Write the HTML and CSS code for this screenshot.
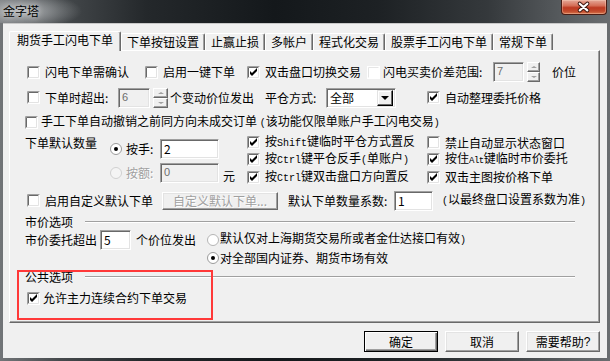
FILE: index.html
```html
<!DOCTYPE html>
<html>
<head>
<meta charset="utf-8">
<link rel="stylesheet" href="styles.css">
</head>
<body>
<svg class="defs" width="0" height="0" aria-hidden="true">
  <defs>
    <symbol id="box" viewBox="0 0 13 13">
      <rect width="13" height="13" fill="#fff"/>
      <path d="M0.5 12.5V0.5H12.5" stroke="#a0a0a0" fill="none"/>
      <path d="M1.5 11.5V1.5H11.5" stroke="#696969" fill="none"/>
      <path d="M1.5 11.5H11.5V1.5" stroke="#e3e3e3" fill="none"/>
    </symbol>
    <symbol id="boxon" viewBox="0 0 13 13">
      <rect width="13" height="13" fill="#fff"/>
      <path d="M0.5 12.5V0.5H12.5" stroke="#a0a0a0" fill="none"/>
      <path d="M1.5 11.5V1.5H11.5" stroke="#696969" fill="none"/>
      <path d="M1.5 11.5H11.5V1.5" stroke="#e3e3e3" fill="none"/>
      <polygon points="3,5 5,7 10,2 10,5 5,10 3,8" fill="#000"/>
    </symbol>
    <symbol id="boxlite" viewBox="0 0 13 13">
      <rect width="13" height="13" fill="#fff"/>
      <path d="M1.5 11.5V1.5H11.5" stroke="#e6e6e6" fill="none"/>
    </symbol>
    <symbol id="rad" viewBox="0 0 12 12">
      <circle cx="6" cy="6" r="5.5" fill="#fff" stroke="#b4b4b4"/>
    </symbol>
    <symbol id="radon" viewBox="0 0 12 12">
      <circle cx="6" cy="6" r="5.5" fill="#fff" stroke="#9a9a9a"/>
      <circle cx="6" cy="6" r="2" fill="#000"/>
    </symbol>
    <symbol id="raddis" viewBox="0 0 12 12">
      <circle cx="6" cy="6" r="5.5" fill="#f4f4f4" stroke="#d0d0d0"/>
    </symbol>
  </defs>
</svg>

<div class="window">
  <div class="titlebar">
    <span class="title">金字塔</span>
    <div class="close">
      <svg width="46" height="15" viewBox="0 0 46 15">
        <path d="M18.5 3.5 L26.5 10.5 M26.5 3.5 L18.5 10.5" stroke="#3c1710" stroke-width="4.2" stroke-linecap="round"/>
        <path d="M18.5 3.5 L26.5 10.5 M26.5 3.5 L18.5 10.5" stroke="#fff" stroke-width="2.2" stroke-linecap="round"/>
      </svg>
    </div>
  </div>

  <div class="client">
    <div class="tabs">
      <div class="tab active">期货手工闪电下单</div>
      <div class="tab">下单按钮设置</div>
      <div class="tab">止赢止损</div>
      <div class="tab">多帐户</div>
      <div class="tab">程式化交易</div>
      <div class="tab">股票手工闪电下单</div>
      <div class="tab">常规下单</div>
    </div>

    <div class="panel">
      <div class="row r1">
        <label class="opt"><svg class="cb"><use href="#box"/></svg><span>闪电下单需确认</span></label>
        <label class="opt"><svg class="cb"><use href="#box"/></svg><span>启用一键下单</span></label>
        <label class="opt"><svg class="cb"><use href="#boxon"/></svg><span>双击盘口切换交易</span></label>
        <label class="opt tight"><svg class="cb"><use href="#boxlite"/></svg><span>闪电买卖价差范围:</span></label>
        <span class="edit dis-edit w31">7</span>
        <span class="spin"><span class="sb"><i class="up"></i></span><span class="sb"><i class="dn"></i></span></span>
        <span>价位</span>
      </div>

      <div class="row r2">
        <label class="opt"><svg class="cb"><use href="#box"/></svg><span>下单时超出:</span></label>
        <span class="edit dis-edit w32">6</span>
        <span class="spin wide"><span class="sb"><i class="up"></i></span><span class="sb"><i class="dn"></i></span></span>
        <span>个变动价位发出</span>
        <span>平仓方式:</span>
        <span class="combo"><span class="cval">全部</span><span class="cbtn"><i class="dn blk"></i></span></span>
        <label class="opt"><svg class="cb"><use href="#boxon"/></svg><span>自动整理委托价格</span></label>
      </div>

      <div class="row r3">
        <label class="opt slim"><svg class="cb"><use href="#box"/></svg><span>手工下单自动撤销之前同方向未成交订单 <span class="a">(</span>该功能仅限单账户手工闪电交易<span class="a">)</span></span></label>
      </div>

      <div class="mid">
        <div class="qty">
          <span class="qty-label">下单默认数量</span>
          <div class="radios">
            <div class="rrow">
              <svg class="rb"><use href="#radon"/></svg>
              <span class="rtext">按手:</span>
              <span class="edit w59">2</span>
            </div>
            <div class="rrow">
              <svg class="rb"><use href="#raddis"/></svg>
              <span class="rtext dis">按额:</span>
              <span class="edit dis-edit w59">0</span>
              <span class="yuan">元</span>
            </div>
          </div>
        </div>
        <div class="checks">
          <label class="opt"><svg class="cb"><use href="#boxon"/></svg><span>按<span class="a">Shift</span>键临时平仓方式置反</span></label>
          <label class="opt"><svg class="cb"><use href="#box"/></svg><span>禁止自动显示状态窗口</span></label>
          <label class="opt"><svg class="cb"><use href="#boxon"/></svg><span>按<span class="a">Ctrl</span>键平仓反手<span class="a">(</span>单账户<span class="a">)</span></span></label>
          <label class="opt"><svg class="cb"><use href="#boxon"/></svg><span>按住<span class="a sm">Alt</span>键临时市价委托</span></label>
          <label class="opt"><svg class="cb"><use href="#boxon"/></svg><span>按<span class="a">Ctrl</span>键双击盘口方向置反</span></label>
          <label class="opt"><svg class="cb"><use href="#boxon"/></svg><span>双击主图按价格下单</span></label>
        </div>
      </div>

      <div class="row r6">
        <label class="opt"><svg class="cb"><use href="#box"/></svg><span>启用自定义默认下单</span></label>
        <span class="btn small dis">自定义默认下单...</span>
        <span>默认下单数量系数:</span>
        <span class="edit w39">1</span>
        <span><span class="a">(</span>以最终盘口设置系数为准<span class="a">)</span></span>
      </div>

      <div class="group">
        <span>市价选项</span>
        <span class="gline"></span>
      </div>

      <div class="row r7">
        <span>市价委托超出</span>
        <span class="edit w31">5</span>
        <span>个价位发出</span>
        <label class="ropt"><svg class="rb"><use href="#rad"/></svg><span>默认仅对上海期货交易所或者金仕达接口有效<span class="a">)</span></span></label>
      </div>

      <div class="row r8">
        <label class="ropt"><svg class="rb"><use href="#radon"/></svg><span>对全部国内证券、期货市场有效</span></label>
      </div>

      <div class="group g2">
        <span>公共选项</span>
        <span class="gline"></span>
      </div>

      <div class="row r9">
        <label class="opt slim"><svg class="cb"><use href="#boxon"/></svg><span>允许主力连续合约下单交易</span></label>
      </div>

      <div class="highlight"></div>
    </div>

    <div class="buttons">
      <span class="btn default">确定</span>
      <span class="btn">取消</span>
      <span class="btn">需要帮助<span class="q">?</span></span>
    </div>
  </div>
</div>
</body>
</html>
```

FILE: styles.css
```css
* { box-sizing: border-box; }
html, body { margin: 0; padding: 0; }
body {
  width: 610px;
  height: 361px;
  overflow: hidden;
  font-family: "Noto Sans CJK SC", "Noto Sans", sans-serif;
  font-size: 12px;
  line-height: 14px;
  color: #000;
  background: #2a2e32;
}
.defs { position: absolute; width: 0; height: 0; overflow: hidden; }

.window {
  width: 610px;
  height: 361px;
  display: flex;
  flex-direction: column;
  background: linear-gradient(90deg, #727578 0%, #45494c 10%, #24282b 24%, #14181b 45%, #1d2124 62%, #35393c 80%, #5c6063 94%, #6a6d70 100%);
}

.titlebar {
  height: 23px;
  display: flex;
  align-items: flex-start;
  flex: none;
  background: radial-gradient(ellipse 60px 18px at 22px 11px, rgba(205,208,210,0.75), rgba(205,208,210,0) 100%);
}
.title {
  margin: 4px 0 0 3px;
  font-size: 12px;
  line-height: 14px;
  color: #000;
  text-shadow: 0 0 6px rgba(255,255,255,0.8);
}
.close {
  margin-left: auto;
  margin-right: 3px;
  width: 46px;
  height: 15px;
  border: 1px solid #4a1c14;
  border-top: none;
  border-radius: 0 0 4px 4px;
  background: linear-gradient(#e4a898 0%, #d56f58 40%, #bd3a22 55%, #c24a2c 80%, #d9774e 100%);
  box-shadow: inset 0 0 0 1px rgba(255,220,200,0.35);
  display: flex;
}

.client {
  flex: 1;
  margin: 0 3px 3px 3px;
  background: #f0f0f0;
  border-top: 1px solid #c8c8c8;
  padding: 0 7px 0 6px;
  display: flex;
  flex-direction: column;
}

/* tabs */
.tabs {
  height: 26px;
  padding-top: 7px;
  display: flex;
  align-items: flex-end;
  flex: none;
}
.tab {
  height: 17px;
  padding: 0 5px;
  border: 1px solid;
  border-bottom: none;
  border-color: #fff #696969 #696969 #fff;
  box-shadow: inset -1px 0 #a0a0a0;
  border-radius: 2px 2px 0 0;
  line-height: 15px;
  white-space: nowrap;
  background: #f0f0f0;
}
.tab.active {
  height: 20px;
  margin-bottom: -1px;
  padding: 0 7px;
  line-height: 16px;
  position: relative;
  z-index: 2;
}

/* panel */
.panel {
  position: relative;
  width: 591px;
  height: 273px;
  flex: none;
  border: 1px solid;
  border-color: #fff #696969 #696969 #fff;
  box-shadow: inset -1px -1px #a0a0a0;
  padding: 9px 0 0 15px;
}

.row { display: grid; align-items: center; white-space: nowrap; }
.r1 { height: 24px; padding-left: 2px; grid-template-columns: 118px 102px 120px 126px 34px 25px auto; }
.r2 { height: 27px; padding-left: 2px; grid-template-columns: 91px 35px 17px 95px 61px 101px auto; }
.r3 { height: 23px; grid-template-columns: auto; }
.r6 { height: 29px; padding-left: 2px; grid-template-columns: 135px 126px 106px 48px auto; }
.r7 { height: 21px; grid-template-columns: 75px 36px 71px auto; }
.r8 { height: 15px; padding-left: 182px; grid-template-columns: auto; }
.r9 { height: 16px; margin-top: 6px; padding-left: 2px; grid-template-columns: auto; }

.opt { display: flex; align-items: center; white-space: nowrap; }
.opt .cb { margin-right: 5px; }
.opt.tight .cb, .opt.slim .cb { margin-right: 3px; }
.cb { width: 13px; height: 13px; flex: none; }
.ropt { display: flex; align-items: center; white-space: nowrap; }
.ropt .rb { margin-right: 1px; }
.rb { width: 12px; height: 12px; flex: none; }

.a { font-family: "Liberation Mono", monospace; font-size: 10px; }
.a.sm { font-size: 9px; letter-spacing: -0.5px; }

.edit {
  height: 20px;
  background: #fff;
  border: 1px solid;
  border-color: #a0a0a0 #fff #fff #a0a0a0;
  box-shadow: inset 1px 1px #696969, inset -1px -1px #e3e3e3;
  padding: 0 3px;
  line-height: 17px;
  display: block;
}
.dis-edit { background: #f0f0f0; color: #6d6d6d; font-family: "Liberation Sans", sans-serif; font-size: 11px; }
.w31 { width: 31px; }
.w32 { width: 32px; }
.w39 { width: 39px; }
.w59 { width: 59px; }

.spin {
  width: 13px;
  height: 20px;
  display: flex;
  flex-direction: column;
}
.spin.wide { width: 15px; }
.sb {
  flex: 1;
  border: 1px solid;
  border-color: #fff #696969 #696969 #fff;
  box-shadow: inset -1px -1px #a0a0a0;
  background: #f0f0f0;
  display: flex;
  align-items: center;
  justify-content: center;
}
.up, .dn { width: 0; height: 0; border-left: 3px solid transparent; border-right: 3px solid transparent; }
.up { border-bottom: 2px solid #a0a0a0; }
.dn { border-top: 2px solid #a0a0a0; }
.dn.blk { border-left-width: 4px; border-right-width: 4px; border-top: 4px solid #000; }

.combo {
  width: 70px;
  height: 20px;
  background: #fff;
  border: 1px solid;
  border-color: #a0a0a0 #fff #fff #a0a0a0;
  box-shadow: inset 1px 1px #696969, inset -1px -1px #e3e3e3;
  display: flex;
  align-items: center;
  padding: 2px;
}
.cval { flex: 1; padding-left: 1px; line-height: 16px; }
.cbtn {
  width: 16px;
  height: 16px;
  border: 1px solid;
  border-color: #e3e3e3 #000 #000 #e3e3e3;
  box-shadow: inset -1px -1px #696969, inset 1px 1px #fff;
  background: #f0f0f0;
  display: flex;
  align-items: center;
  justify-content: center;
}

/* middle block */
.mid { display: flex; height: 52px; }
.qty { width: 222px; display: flex; flex: none; }
.qty-label { margin-top: 2px; width: 72px; white-space: nowrap; }
.radios { margin: 5px 0 0 13px; display: flex; flex-direction: column; gap: 4px; }
.rrow { display: flex; align-items: center; gap: 4px; height: 20px; }
.rtext { width: 30px; white-space: nowrap; }
.yuan { align-self: flex-end; }
.dis { color: #a0a0a0; text-shadow: 1px 1px #fff; }
.checks {
  display: grid;
  grid-template-columns: 180px auto;
  grid-template-rows: 17px 17px 18px;
  align-items: center;
  white-space: nowrap;
}

/* group headers */
.group { display: flex; align-items: center; height: 14px; width: 550px; }
.gline { flex: 1; margin-left: 12px; height: 2px; border-top: 1px solid #a0a0a0; border-bottom: 1px solid #fff; }
.g2 { margin-top: 5px; }

.highlight {
  position: absolute;
  left: 7px;
  top: 219px;
  width: 196px;
  height: 50px;
  border: 2px solid #ff3838;
}

/* buttons */
.btn {
  display: flex;
  align-items: center;
  justify-content: center;
  width: 74px;
  height: 21px;
  border: 1px solid;
  border-color: #fff #696969 #696969 #fff;
  box-shadow: inset -1px -1px #a0a0a0, inset 1px 1px #e3e3e3;
  background: #f0f0f0;
  white-space: nowrap;
}
.btn.small { width: 116px; height: 18px; }
.btn.default {
  border-color: #000;
  box-shadow: inset 1px 1px #fff, inset -1px -1px #696969, inset -2px -2px #a0a0a0;
}
.buttons {
  display: flex;
  justify-content: flex-end;
  gap: 7px;
  margin-top: 8px;
}
.q { font-family: "Liberation Sans", sans-serif; }
```
